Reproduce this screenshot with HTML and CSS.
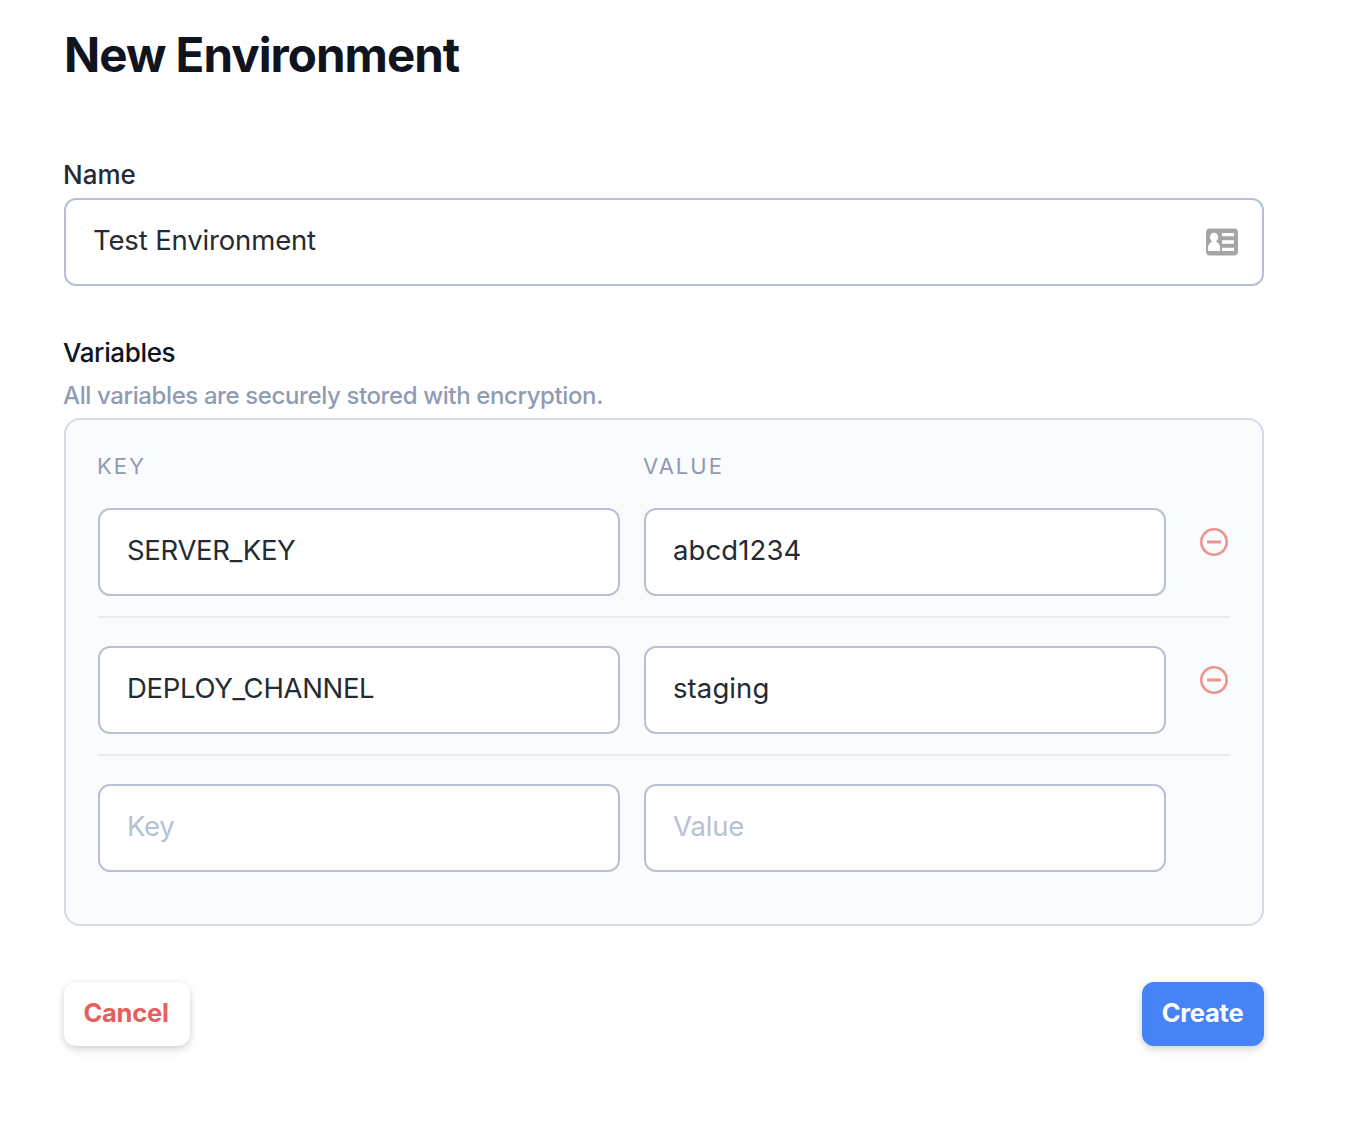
FILE: index.html
```html
<!DOCTYPE html>
<html lang="en">
<head>
<meta charset="utf-8">
<title>New Environment</title>
<link rel="stylesheet" href="styles.css">
</head>
<body>
<main class="page">
  <h1 class="title"><span>New Environment</span></h1>
  <form class="form">
    <label class="label label-name" for="name"><span>Name</span></label>
    <div class="input name-field">
      <input class="control" id="name" type="text" value="Test Environment">
      <svg class="contact-icon" width="32" height="28" viewBox="0 0 32 28" aria-hidden="true">
        <rect y="0.500" width="32" height="27" rx="4" fill="#a5a5a5"/>
        <ellipse cx="8" cy="9.300" rx="4.100" ry="4.600" fill="#fff"/>
        <path d="M5.800 12h4.400v2c2.600.8 3.900 3 3.900 6v3H2.100v-3c0-3 1.300-5.200 3.700-6z" fill="#fff"/>
        <path d="M16 5h12v3.200H16zM16 12.300h12v3.400H16zM16 19.800h12v3.200H16z" fill="#fff"/>
      </svg>
    </div>
    <h2 class="label label-variables"><span>Variables</span></h2>
    <p class="hint"><span>All variables are securely stored with encryption.</span></p>
    <section class="panel">
      <div class="row head">
        <span class="column-name">KEY</span>
        <span class="column-name">VALUE</span>
      </div>
      <div class="row">
        <input class="input control key" type="text" value="SERVER_KEY" aria-label="Key">
        <input class="input control value" type="text" value="abcd1234" aria-label="Value">
        <button class="remove" type="button" aria-label="Remove">
          <svg width="28" height="28" viewBox="0 0 28 28" fill="none" stroke="#ec9490"><circle cx="14" cy="14" r="12.700" stroke-width="2.600"/><path d="M7 14h14" stroke-width="3"/></svg>
        </button>
      </div>
      <div class="row">
        <input class="input control key" type="text" value="DEPLOY_CHANNEL" aria-label="Key">
        <input class="input control value" type="text" value="staging" aria-label="Value">
        <button class="remove" type="button" aria-label="Remove">
          <svg width="28" height="28" viewBox="0 0 28 28" fill="none" stroke="#ec9490"><circle cx="14" cy="14" r="12.700" stroke-width="2.600"/><path d="M7 14h14" stroke-width="3"/></svg>
        </button>
      </div>
      <div class="row last">
        <input class="input control key" type="text" placeholder="Key">
        <input class="input control" type="text" placeholder="Value">
      </div>
    </section>
    <footer class="actions">
      <button class="button cancel" type="button">Cancel</button>
      <button class="button create" type="button">Create</button>
    </footer>
  </form>
</main>
</body>
</html>
```

FILE: styles.css
```css
* { box-sizing: border-box; }
body {
  margin: 0;
  background: #fff;
  font-family: Inter, "Liberation Sans", sans-serif;
  color: #0f141e;
}
.page { width: 1264px; min-height: 1122px; padding: 24px 0 0 64px; }
.title {
  margin: 0 0 73px;
  font-size: 47.500px;
  line-height: 61px;
  font-weight: 700;
  letter-spacing: -0.98px;
}
.form { display: flex; flex-direction: column; }
.label {
  margin: 0 0 0 -1px;
  font-size: 26px;
  line-height: 34px;
  font-weight: 500;
}
.label-name { margin-bottom: 6px; color: #252b36; }
.label-variables { margin: 50px 0 9px -1px; letter-spacing: -0.35px; }
.input {
  height: 88px;
  border: 2px solid #b8c1d3;
  border-radius: 12px;
  background: #fff;
}
.control {
  min-width: 0;
  padding: 0 27px 4px;
  font: 400 27.500px Inter, "Liberation Sans", sans-serif;
  letter-spacing: -0.15px;
  color: #252a33;
  outline: none;
}
.control.key { letter-spacing: -0.33px; }
.control.value { letter-spacing: 0.1px; }
.control::placeholder { color: #b8c1d3; opacity: 1; }
.name-field { display: flex; align-items: center; padding-right: 24px; }
.name-field .control { flex: 1; height: 84px; border: 0; background: none; }
.hint {
  margin: 0 0 6px -1px;
  font-size: 24px;
  line-height: 33px;
  font-weight: 500;
  letter-spacing: -0.39px;
  color: #8f9bb3;
}
.panel {
  height: 508px;
  padding: 30px 32px 0;
  border: 2px solid #d3dae8;
  border-radius: 16px;
  background: #fafbfd;
}
.row {
  display: grid;
  grid-template-columns: 522px 522px 28px;
  column-gap: 24px;
  height: 138px;
  padding-top: 28px;
  border-bottom: 2px solid #e8ebf1;
}
.row.head { height: 30px; padding: 0; border: 0; }
.row.last { border: 0; }
.column-name {
  margin-left: -1px;
  font-size: 22px;
  line-height: 33px;
  letter-spacing: 2px;
  color: #8f9bb3;
}
.remove {
  width: 28px;
  height: 28px;
  margin: 20px 0 0 10px;
  padding: 0;
  border: 0;
  background: none;
}
.remove svg { display: block; }
.actions { display: flex; justify-content: space-between; margin-top: 56px; }
.button {
  height: 64px;
  padding: 0 2px 3px 0;
  border: 0;
  border-radius: 12px;
  font: 700 25.500px Inter, "Liberation Sans", sans-serif;
  letter-spacing: -0.25px;
  box-shadow: 0 2px 6px rgba(20, 30, 40, .17), 0 6px 12px rgba(20, 30, 40, .05);
}
.cancel { width: 126px; background: #fff; color: #e5605b; }
.create { width: 122px; padding-right: 1px; background: #4583f7; color: #fff; }
```
